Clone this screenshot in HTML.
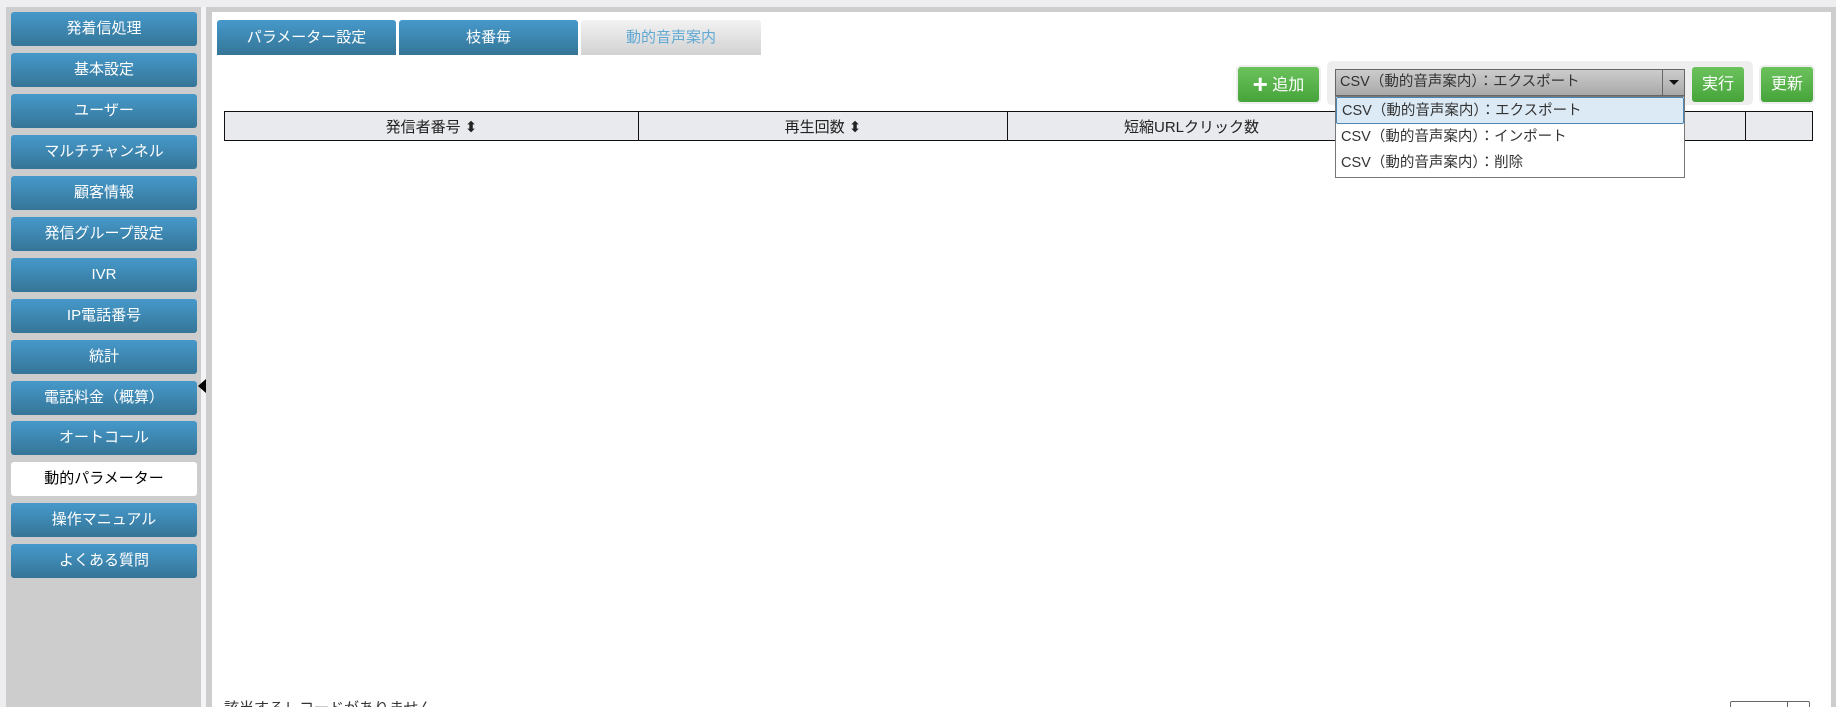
<!DOCTYPE html>
<html style="overflow:hidden;height:707px"><head><meta charset="utf-8"><style>
*{box-sizing:border-box;margin:0;padding:0}
body{width:1836px;height:707px;overflow:hidden;background:#eeeef0;font-family:"Liberation Sans","Noto Sans CJK JP",sans-serif;position:relative}
#wrap{position:absolute;left:0;top:0;width:1836px;height:707px;overflow:hidden}
.side{position:absolute;left:6px;top:7px;width:195px;height:700px;background:#cdcdcd}
.strip{position:absolute;left:201px;top:7px;width:5px;height:700px;background:#f4f4f6}
.btn{position:absolute;left:11px;width:186px;height:34px;border-radius:3px;background:linear-gradient(#4699cb,#357597);color:#fff;font-size:15px;text-align:center;line-height:34px}
.btn.act{background:#fff;color:#000}
.panel{position:absolute;left:206px;top:7px;width:1630px;height:700px;background:#cdcdcd}
.white{position:absolute;left:212px;top:12px;width:1619px;height:695px;background:#fff}
.tab{position:absolute;top:20px;height:35px;border-radius:3px 3px 0 0;background:linear-gradient(#4699cb,#357597);color:#fff;font-size:15px;text-align:center;line-height:35px}
.tab.off{background:linear-gradient(#f2f2f2,#d2d2d2);color:#62a9d4}
.g{position:absolute;top:67px;height:35px;border-radius:3px;background:linear-gradient(#6cc25c,#45a43a);color:#fff;font-size:16px;text-align:center;line-height:35px;box-shadow:0 0 0 2px #eee}
table{position:absolute;left:224px;top:111px;width:1589px;height:30px;border-collapse:collapse;background:#e9eaee;font-size:15px;color:#222}
td{border:1px solid #111;text-align:center}
.dd{position:absolute;left:1335px;top:96px;width:350px;height:82px;background:#fff;border:1px solid #777;font-size:14.5px;color:#333}
.dd div{height:26.5px;line-height:26px;padding-left:5px}
</style></head><body><div id="wrap">
<div class="side"></div><div class="strip"></div>
<div class="btn" style="top:12px">発着信処理</div>
<div class="btn" style="top:53px">基本設定</div>
<div class="btn" style="top:94px">ユーザー</div>
<div class="btn" style="top:135px">マルチチャンネル</div>
<div class="btn" style="top:176px">顧客情報</div>
<div class="btn" style="top:217px">発信グループ設定</div>
<div class="btn" style="top:258px">IVR</div>
<div class="btn" style="top:299px">IP電話番号</div>
<div class="btn" style="top:340px">統計</div>
<div class="btn" style="top:381px">電話料金（概算）</div>
<div class="btn" style="top:421px">オートコール</div>
<div class="btn act" style="top:462px">動的パラメーター</div>
<div class="btn" style="top:503px">操作マニュアル</div>
<div class="btn" style="top:544px">よくある質問</div>
<div class="panel"></div><div class="white"></div>
<div style="position:absolute;left:198px;top:379px;width:0;height:0;border-top:7px solid transparent;border-bottom:7px solid transparent;border-right:8px solid #000"></div>
<div class="tab" style="left:217px;width:179px">パラメーター設定</div>
<div class="tab" style="left:399px;width:179px">枝番毎</div>
<div class="tab off" style="left:581px;width:180px">動的音声案内</div>
<div class="g" style="left:1238px;width:81px"><span style="font-size:26px;font-weight:bold;vertical-align:-3px">+</span> 追加</div>
<div style="position:absolute;left:1327px;top:61px;width:426px;height:44px;background:#eee;border-radius:5px"></div>
<div style="position:absolute;left:1335px;top:69px;width:350px;height:27px;border:1px solid #666;background:linear-gradient(#ccc,#a9a9a9);font-size:14.5px;color:#333;line-height:25px;padding-left:4px">CSV（動的音声案内）：エクスポート<div style="position:absolute;right:0;top:0;width:22px;height:25px;border-left:1px solid #666"><div style="margin:10px auto 0;width:0;border-left:5px solid transparent;border-right:5px solid transparent;border-top:5px solid #111"></div></div></div>
<div class="g" style="left:1692px;width:52px">実行</div>
<div class="g" style="left:1761px;width:52px">更新</div>
<table><tr><td style="width:414px">発信者番号 ⬍</td><td style="width:369px">再生回数 ⬍</td><td style="width:368px">短縮URLクリック数</td><td style="width:370px"></td><td></td></tr></table>
<div class="dd"><div style="background:#dceaf5;border:1px solid #4b88b8;border-radius:2px">CSV（動的音声案内）：エクスポート</div><div>CSV（動的音声案内）：インポート</div><div>CSV（動的音声案内）：削除</div></div>
<div style="position:absolute;left:224px;top:700px;font-size:15px;line-height:18px;color:#333">該当するレコードがありません</div>
<div style="position:absolute;left:1730px;top:701px;width:80px;height:10px;border:1px solid #666;border-radius:2px"><div style="position:absolute;left:56px;top:0;height:10px;border-left:1px solid #666"></div></div>
</div></body></html>
